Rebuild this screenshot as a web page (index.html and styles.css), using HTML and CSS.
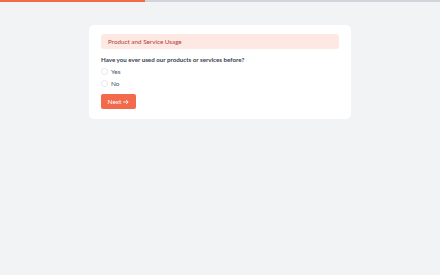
FILE: index.html
```html
<!DOCTYPE html>
<html>
<head>
<meta charset="utf-8">
<link rel="stylesheet" href="styles.css">
</head>
<body>
<div class="progress"><div class="progress-fill" style="width:33%"></div></div>
<main class="wrap">
  <section class="card">
    <div class="section-title">Product and Service Usage</div>
    <div class="question">Have you ever used our products or services before?</div>
    <div class="options">
      <label class="option"><span class="radio"></span><span>Yes</span></label>
      <label class="option"><span class="radio"></span><span>No</span></label>
    </div>
    <button class="next">Next <svg class="arrow" viewBox="0 0 10 10" width="6" height="6"><path d="M1 5h7M5.5 2l3 3-3 3" fill="none" stroke="#fff" stroke-width="1.4" stroke-linecap="round" stroke-linejoin="round"/></svg></button>
  </section>
</main>
</body>
</html>
```
FILE: styles.css
```css
* { box-sizing: border-box; }
html, body { margin: 0; padding: 0; }
body {
  background: #f2f3f5;
  font-family: Lato, "Noto Sans", sans-serif;
  width: 440px;
  height: 275px;
}
.progress {
  height: 2px;
  background: #d1d5db;
}
.progress-fill {
  height: 100%;
  background: #f26b4b;
}
.wrap {
  padding: 23px 89px 0;
}
.card {
  background: #fff;
  border-radius: 5px;
  padding: 9px 12px 10px;
  display: flex;
  flex-direction: column;
  align-items: flex-start;
}
.section-title {
  align-self: stretch;
  background: #fde8e4;
  color: #b3402e;
  font-size: 6.3px;
  height: 15px;
  line-height: 15px;
  padding-left: 7px;
  border-radius: 3px;
}
.question {
  margin-top: 6px;
  font-size: 6.2px;
  font-weight: 700;
  color: #374151;
  line-height: 9px;
}
.options {
  display: flex;
  flex-direction: column;
  gap: 4px;
  margin-top: 3px;
}
.option {
  display: flex;
  align-items: center;
  gap: 3px;
  font-size: 6.5px;
  color: #4b5563;
  height: 8px;
}
.radio {
  width: 7px;
  height: 7px;
  border: 1px solid #e5e7eb;
  border-radius: 50%;
  background: #fff;
}
.next {
  margin-top: 7px;
  height: 15px;
  width: 35px;
  border: none;
  border-radius: 2px;
  background: #f26a4b;
  color: #fff;
  font-family: Lato, "Noto Sans", sans-serif;
  font-size: 6.5px;
  padding: 0;
  display: flex;
  align-items: center;
  justify-content: center;
  gap: 2px;
}
.arrow { display: block; }
```
